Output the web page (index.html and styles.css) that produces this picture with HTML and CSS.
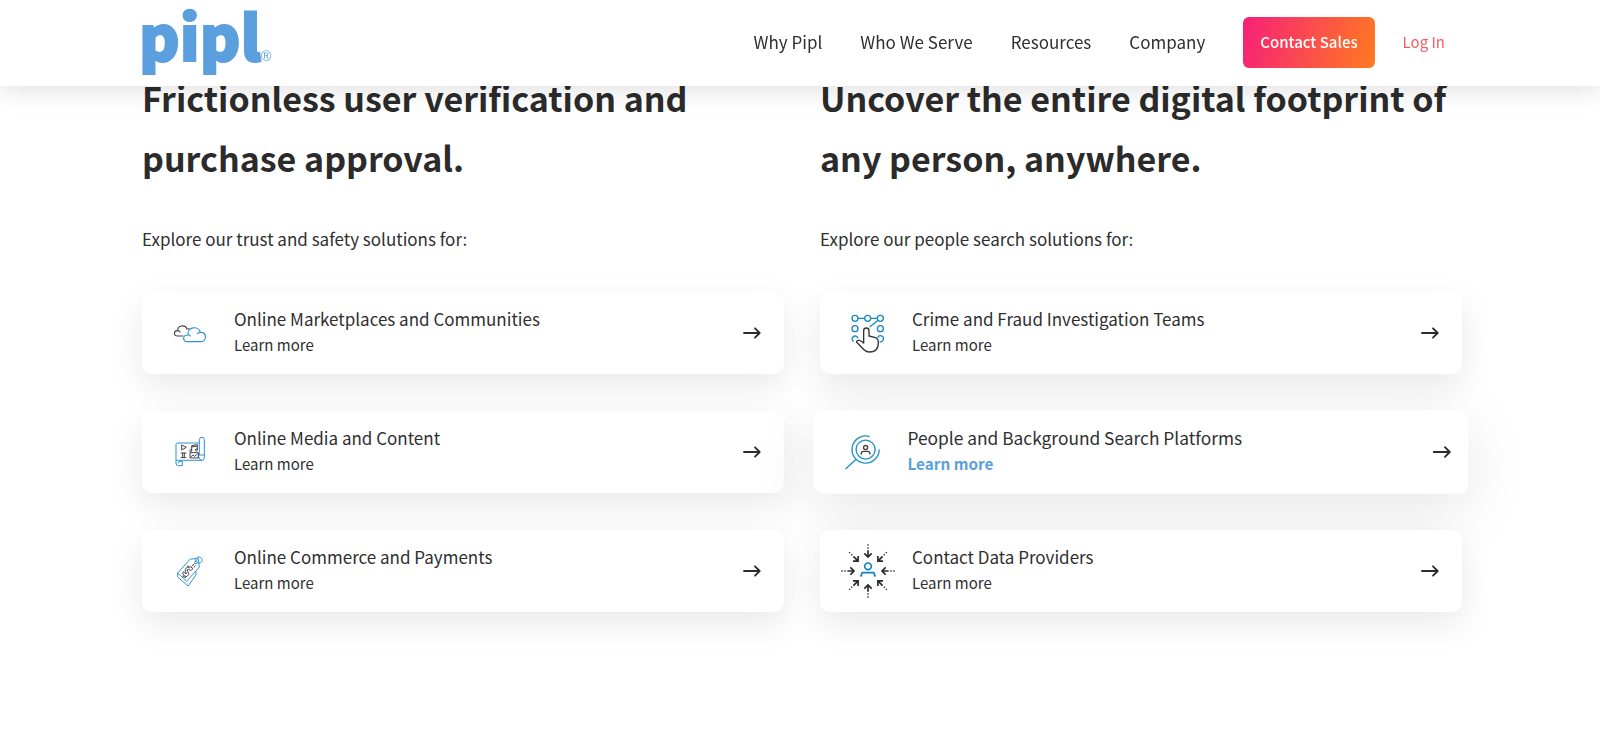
FILE: index.html
```html
<!DOCTYPE html>
<html lang="en">
<head>
<meta charset="utf-8">
<meta name="viewport" content="width=device-width, initial-scale=1">
<title>Pipl</title>
<link rel="stylesheet" href="styles.css">
</head>
<body>
<svg class="defs" aria-hidden="true">
  <symbol id="arrow" viewBox="0 0 18 12"><path d="M1 6h15.500M12 1.300L16.700 6L12 10.700" fill="none" stroke="#2b2b2b" stroke-width="1.800" stroke-linecap="round" stroke-linejoin="round"/></symbol>
</svg>
<header class="site-header">
  <div class="wrap bar">
    <a class="logo" href="#" aria-label="Pipl home"><span class="logo-word">pipl</span><span class="logo-mark">®</span></a>
    <nav class="nav">
      <a href="#">Why Pipl</a>
      <a href="#">Who We Serve</a>
      <a href="#">Resources</a>
      <a href="#">Company</a>
      <a class="cta" href="#">Contact Sales</a>
      <a class="login" href="#">Log In</a>
    </nav>
  </div>
</header>
<main class="wrap columns">
  <section>
    <h2>Frictionless user verification and purchase approval.</h2>
    <p class="lead">Explore our trust and safety solutions for:</p>
    <div class="cards">
      <a class="card" href="#">
        <svg class="icon" viewBox="0 0 162 162" aria-hidden="true"><g fill="none" stroke-width="3.500" stroke-linecap="round">
          <path stroke="#444" d="M60 90H43C31 90 31 74 44 74C43 57 68 55 72 69Q77 67 80 70M44 74Q49 74 51 78"/>
          <path stroke="#2e93cc" d="M74 107C57 107 58 87 75 87C72 62 106 58 112 79C133 77 131 107 114 107ZM75 87Q79 86 82 90M103 83Q106 79 112 79"/>
        </g></svg>
        <span class="text"><span class="title">Online Marketplaces and Communities</span><span class="more">Learn more</span></span>
        <svg class="arrow" aria-hidden="true"><use href="#arrow"/></svg>
      </a>
      <a class="card" href="#">
        <svg class="icon" viewBox="0 0 162 162" aria-hidden="true"><g fill="none" stroke-width="3" stroke-linejoin="round">
          <g stroke="#2e93cc"><path d="M108 54H43Q39 54 39 59V114Q39 122 46 122H58V109H51Q46 109 46 115M58 106H117Q124 106 124 98V44Q124 37 117 37Q109 37 109 44V90H124M109 90Q104 92 108 99Q110 106 117 106M39 106H58"/></g>
          <g stroke="#444"><path d="M56 60L70 67L56 75ZM86 78V62L103 59V74M86 66L103 63"/><circle cx="83" cy="77" r="3"/><circle cx="100" cy="75" r="3"/><path d="M53 84H70M53 98H70M59 84V98M64 84V98M81 83H106V99H81ZM83 96L90 90L95 94L104 86"/></g>
        </g></svg>
        <span class="text"><span class="title">Online Media and Content</span><span class="more">Learn more</span></span>
        <svg class="arrow" aria-hidden="true"><use href="#arrow"/></svg>
      </a>
      <a class="card" href="#">
        <svg class="icon" viewBox="0 0 162 162" aria-hidden="true"><g fill="none" stroke-width="3" stroke-linejoin="round">
          <g stroke="#2e93cc"><path d="M44 87L82 45L106 44L109 69L71 112ZM44 87V99L75 126L99 93V82"/><path d="M99 51C95 37 115 35 117 46C118 56 111 58 104 57"/><circle cx="99" cy="55" r="4"/></g>
          <g stroke="#444"><path d="M59 88L64 96Q72 102 78 91L72 78Q77 73 83 80L90 74Q83 64 73 70Q62 75 70 89L65 87L61 83ZM86 67L94 59M58 96L69 102M72 65L80 72M92 70L98 65"/></g>
        </g></svg>
        <span class="text"><span class="title">Online Commerce and Payments</span><span class="more">Learn more</span></span>
        <svg class="arrow" aria-hidden="true"><use href="#arrow"/></svg>
      </a>
    </div>
  </section>
  <section>
    <h2>Uncover the entire digital footprint of any person, anywhere.</h2>
    <p class="lead">Explore our people search solutions for:</p>
    <div class="cards">
      <a class="card" href="#">
        <svg class="icon" viewBox="0 0 162 162" aria-hidden="true"><g fill="none" stroke-width="4">
          <g stroke="#1b86c4"><circle cx="42" cy="37" r="9"/><circle cx="80" cy="37" r="9"/><circle cx="118" cy="37" r="9"/><circle cx="42" cy="68" r="9"/><circle cx="118" cy="68" r="9"/><path d="M51 37H71M89 37H109M111 43L86 63M38 107A9 9 0 1 1 51 97M110 95A9 9 0 1 1 116 107"/></g>
          <path stroke="#333" stroke-linejoin="round" fill="#fff" d="M68 110V74Q68 66 76 66Q84 66 84 74V90L101 94Q112 97 112 108Q113 138 86 138Q76 138 69 131L47 109Q46 102 55 103Q61 104 68 111Z"/>
        </g></svg>
        <span class="text"><span class="title">Crime and Fraud Investigation Teams</span><span class="more">Learn more</span></span>
        <svg class="arrow" aria-hidden="true"><use href="#arrow"/></svg>
      </a>
      <a class="card card-active" href="#">
        <svg class="icon" viewBox="0 0 162 162" aria-hidden="true"><g fill="none" stroke-width="4" stroke-linecap="round">
          <g stroke="#2391cd"><circle cx="90" cy="74" r="28"/><path d="M100 35A40 40 0 1 0 130 75M62 102L32 130"/></g>
          <g stroke="#444"><circle cx="90" cy="68" r="6"/><path d="M77 87Q77 79 84 79H96Q103 79 103 87"/></g>
        </g></svg>
        <span class="text"><span class="title">People and Background Search Platforms</span><span class="more">Learn more</span></span>
        <svg class="arrow" aria-hidden="true"><use href="#arrow"/></svg>
      </a>
      <a class="card" href="#">
        <svg class="icon" viewBox="-81 -81 162 162" aria-hidden="true">
          <g id="ray" fill="none" stroke="#2b2b2b"><path d="M0-62V-42M-11-53L0-42L11-53" stroke-width="5"/><path d="M0-80v4M0-71v4" stroke-width="4"/></g>
          <use href="#ray" transform="rotate(45)"/><use href="#ray" transform="rotate(90)"/><use href="#ray" transform="rotate(135)"/><use href="#ray" transform="rotate(180)"/><use href="#ray" transform="rotate(225)"/><use href="#ray" transform="rotate(270)"/><use href="#ray" transform="rotate(315)"/>
          <g fill="none" stroke="#0d83c0" stroke-width="5"><circle cx="0" cy="-14" r="10"/><path d="M-22 17L-17 5H17L22 17"/></g>
        </svg>
        <span class="text"><span class="title">Contact Data Providers</span><span class="more">Learn more</span></span>
        <svg class="arrow" aria-hidden="true"><use href="#arrow"/></svg>
      </a>
    </div>
  </section>
</main>
</body>
</html>
```
FILE: styles.css
```css
* { box-sizing: border-box; }

body {
  margin: 0;
  background: #fff;
  color: #2f2f2f;
  font-family: "Source Sans Pro", "Noto Sans CJK SC", "Noto Sans", sans-serif;
  font-size: 17px;
}

a { color: inherit; text-decoration: none; }

.defs { position: absolute; width: 0; height: 0; }

.wrap {
  width: 100%;
  max-width: 1356px;
  margin: 0 auto;
  padding: 0 16px 0 20px;
}

.site-header {
  position: fixed;
  top: 0;
  left: 0;
  right: 0;
  z-index: 10;
  background: #fff;
  box-shadow: 0 0 30px rgba(0, 0, 0, 0.16);
}

.bar {
  display: flex;
  align-items: center;
  justify-content: space-between;
  min-height: 86px;
}

.logo {
  display: flex;
  align-items: flex-end;
  margin-left: -3px;
  padding-bottom: 18px;
  color: #5b9fde;
}

.logo-word {
  font-size: 62px;
  font-weight: 900;
  line-height: 60px;
  -webkit-text-stroke: 2px #5b9fde;
}

.logo-mark {
  font-family: "Liberation Sans", sans-serif;
  font-size: 14px;
  line-height: 16px;
}

.nav {
  display: flex;
  align-items: center;
  gap: 38px;
  padding: 0 17px 2px 0;
  line-height: 28px;
}

.cta {
  padding: 11px 17px 12px;
  border-radius: 6px;
  background: linear-gradient(105deg, #f62079, #ff7a20);
  color: #fff;
  font-size: 15px;
  font-weight: 500;
}

.login {
  margin-left: -10px;
  color: #f95a60;
  font-size: 15px;
}

.columns {
  display: grid;
  grid-template-columns: 1fr 1fr;
  gap: 36px;
  padding-top: 68px;
  padding-bottom: 80px;
}

h2 {
  margin: 0;
  color: #2b2b2b;
  font-size: 34px;
  font-weight: 700;
  line-height: 60px;
}

.lead {
  margin: 36px 0 38px;
  line-height: 30px;
}

.cards {
  display: grid;
  gap: 37px;
}

.card {
  position: relative;
  display: flex;
  align-items: center;
  min-height: 82px;
  padding: 13px 23px 13px 21px;
  border-radius: 10px;
  background: #fff;
  box-shadow: 0 12px 34px rgba(0, 0, 0, 0.09);
}

.icon {
  flex: none;
  width: 54px;
  height: 54px;
  margin-right: 17px;
}

.text {
  display: flex;
  flex: 1;
  flex-direction: column;
  padding-bottom: 2px;
}

.title { line-height: 26px; }

.more {
  font-size: 15px;
  line-height: 26px;
}

.arrow {
  flex: none;
  width: 18px;
  height: 12px;
}

.card-active {
  padding-right: 17px;
  transform: scale(1.02);
  box-shadow: 0 16px 60px rgba(0, 0, 0, 0.1);
}

.card-active .more {
  color: #5b9fde;
  font-weight: 700;
}

@media (max-width: 900px) {
  .columns { grid-template-columns: 1fr; }
}
```
